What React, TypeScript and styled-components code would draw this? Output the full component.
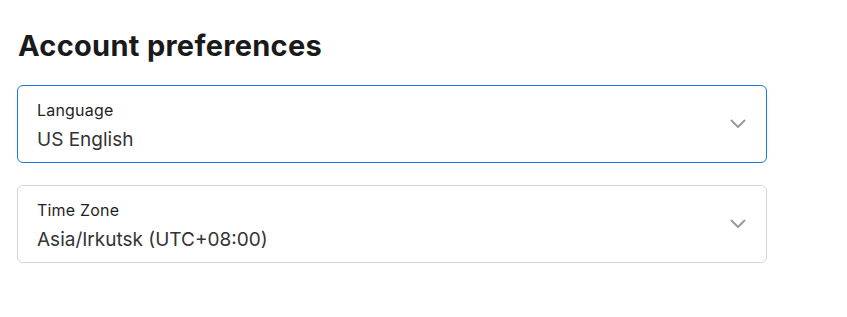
import styled, { createGlobalStyle } from 'styled-components';

const GlobalStyle = createGlobalStyle`
  body {
    margin: 0;
    background: #ffffff;
    font-family: 'Inter', 'Noto Sans', sans-serif;
  }
`;

const Page = styled.div`
  padding: 28px 80px 40px 17px;
`;

const Title = styled.h1`
  margin: 0 0 21px 1px;
  font-size: 29px;
  line-height: 36px;
  font-weight: 700;
  color: #1a1a1a;
  letter-spacing: 0.3px;
`;

const Fields = styled.div`
  display: flex;
  flex-direction: column;
  gap: 22px;
  width: 750px;
`;

const Select = styled.div<{ $focused?: boolean }>`
  display: flex;
  align-items: center;
  justify-content: space-between;
  box-sizing: border-box;
  height: 78px;
  padding: 0 20px 0 19px;
  border: 1px solid ${(p) => (p.$focused ? '#1a73e8' : '#d6d6d6')};
  border-radius: 6px;
  background: #fff;
`;

const Texts = styled.div`
  display: flex;
  flex-direction: column;
  gap: 8px;
  padding-top: 2px;
`;

const Label = styled.div`
  font-size: 16px;
  font-weight: 400;
  letter-spacing: 0.2px;
  color: #1f1f1f;
`;

const Value = styled.div`
  font-size: 19px;
  color: #333;
`;

const Chevron = () => (
  <svg width="16" height="10" viewBox="0 0 16 10" fill="none">
    <path d="M1.5 1.5 L8 8 L14.5 1.5" stroke="#9a9a9a" strokeWidth="2" strokeLinecap="round" strokeLinejoin="round" />
  </svg>
);

function Field({ label, value, focused }: { label: string; value: string; focused?: boolean }) {
  return (
    <Select $focused={focused}>
      <Texts>
        <Label>{label}</Label>
        <Value>{value}</Value>
      </Texts>
      <Chevron />
    </Select>
  );
}

export default function App() {
  return (
    <Page>
      <GlobalStyle />
      <Title>Account preferences</Title>
      <Fields>
        <Field label="Language" value="US English" focused />
        <Field label="Time Zone" value="Asia/Irkutsk (UTC+08:00)" />
      </Fields>
    </Page>
  );
}
